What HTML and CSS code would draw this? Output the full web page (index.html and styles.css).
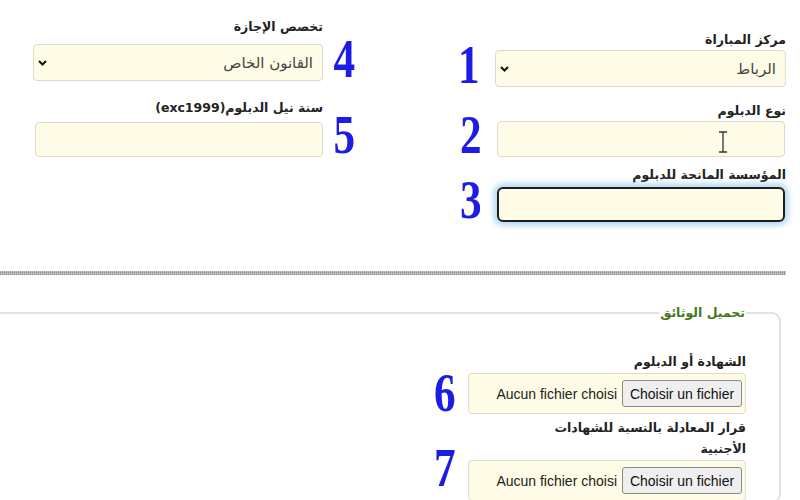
FILE: index.html
```html
<!DOCTYPE html>
<html lang="ar" dir="rtl">
<head>
<meta charset="utf-8">
<link rel="stylesheet" href="styles.css">
</head>
<body>
<div class="page">
  <div class="top">
    <div class="col col-right">
      <div class="field f1">
        <div class="lbl">مركز المباراة</div>
        <div class="row">
          <div class="box select"><span class="val">الرباط</span><svg class="chev" width="9" height="6" viewBox="0 0 9 6"><path d="M1 1 L4.5 4.5 L8 1" fill="none" stroke="#111" stroke-width="2"/></svg></div>
          <span class="num">1</span>
        </div>
      </div>
      <div class="field f2">
        <div class="lbl">نوع الدبلوم</div>
        <div class="row">
          <div class="box input hover"><svg class="ibeam" width="10" height="22" viewBox="0 0 10 22"><path d="M1 1 H9 M5 1 V21 M1 21 H9" fill="none" stroke="#333" stroke-width="1.3"/></svg></div>
          <span class="num">2</span>
        </div>
      </div>
      <div class="field f3">
        <div class="lbl">المؤسسة المانحة للدبلوم</div>
        <div class="row">
          <div class="box input focus"></div>
          <span class="num">3</span>
        </div>
      </div>
    </div>
    <div class="col col-left">
      <div class="field f4">
        <div class="lbl">تخصص الإجازة</div>
        <div class="row">
          <span class="num">4</span>
          <div class="box select"><span class="val">القانون الخاص</span><svg class="chev" width="9" height="6" viewBox="0 0 9 6"><path d="M1 1 L4.5 4.5 L8 1" fill="none" stroke="#111" stroke-width="2"/></svg></div>
        </div>
      </div>
      <div class="field f5">
        <div class="lbl">سنة نيل الدبلوم(exc1999)</div>
        <div class="row">
          <span class="num">5</span>
          <div class="box input"></div>
        </div>
      </div>
    </div>
  </div>
  <div class="sep"></div>
  <fieldset class="docs">
    <legend>تحميل الوثائق</legend>
    <div class="ffield f6">
      <div class="lbl">الشهادة أو الدبلوم</div>
      <div class="row">
        <div class="filebox"><span class="btn">Choisir un fichier</span><span class="none">Aucun fichier choisi</span></div>
        <span class="num">6</span>
      </div>
    </div>
    <div class="ffield f7">
      <div class="lbl two">قرار المعادلة بالنسبة للشهادات<br>الأجنبية</div>
      <div class="row">
        <div class="filebox"><span class="btn">Choisir un fichier</span><span class="none">Aucun fichier choisi</span></div>
        <span class="num num-high">7</span>
      </div>
    </div>
  </fieldset>
</div>
</body>
</html>
```
FILE: styles.css
```css
html, body {
  margin: 0;
  padding: 0;
  background: #ffffff;
  overflow: hidden;
}
body {
  width: 800px;
  height: 500px;
  font-family: "DejaVu Sans", "Liberation Sans", sans-serif;
  color: #222;
}
.page {
  direction: rtl;
}
.top {
  display: flex;
  justify-content: space-between;
  padding: 0 14px 0 33px;
  height: 221px;
}
.col {
  display: flex;
  flex-direction: column;
}
.col-right { width: 328px; padding-top: 31px; }
.col-left { width: 324px; padding-top: 18px; }

.lbl {
  font-size: 12.5px;
  font-weight: bold;
  line-height: 18px;
  color: #222;
}
.col-left .lbl { margin-right: 34px; }

.row {
  display: flex;
  align-items: center;
}
.col-right .row { gap: 13px; }
.col-left .row { gap: 14px; }

.f1 .lbl { margin-bottom: 1px; }
.f2 { margin-top: 15px; }
.f2 .lbl { margin-bottom: 1px; }
.f3 { margin-top: 9px; }
.f3 .lbl { margin-bottom: 2px; }
.f4 .lbl { margin-bottom: 8px; }
.f5 { margin-top: 18px; }
.f5 .lbl { margin-bottom: 4px; }

.box {
  box-sizing: border-box;
  background: #fefbe6;
  border: 1px solid #dedbcc;
  border-radius: 4px;
  position: relative;
}
.select {
  width: 291px;
  height: 37px;
  display: flex;
  align-items: center;
  justify-content: space-between;
  padding: 0 9px 0 4px;
}
.col-left .select { width: 290px; }
.val {
  font-size: 15px;
  color: #444;
}
.chev { display: block; }
.input {
  width: 288px;
  height: 36px;
  margin-right: 1px;
}
.col-left .input { height: 35px; margin-right: 0; }
.focus {
  height: 35px;
  border: 2.5px solid #1e1e1e;
  border-radius: 6px;
  box-shadow: 0 0 5px 4px rgba(140, 200, 236, 0.6);
}
.ibeam {
  position: absolute;
  left: 220px;
  top: 9px;
}

.num {
  display: inline-block;
  width: 24px;
  height: 36px;
  text-align: center;
  font-family: "Liberation Serif", "Times New Roman", serif;
  font-weight: bold;
  font-size: 54px;
  line-height: 36px;
  color: #1c1ce6;
  transform: translateY(-4px) scaleX(0.8);
}
.col-left .num { width: 20px; }

.sep {
  margin: 50px 14px 0 0;
  height: 4px;
  background:
    repeating-linear-gradient(90deg, rgba(120,120,120,0.55) 0 1px, rgba(200,200,200,0.5) 1px 2px),
    repeating-linear-gradient(0deg, #b0b0b0 0 1px, #d6d6d6 1px 2px);
}

.docs {
  margin: 29px 19px 0 -24px;
  padding: 0 33px 0 0;
  border: 2px solid #e2e2e2;
  border-radius: 9px;
  min-width: 0;
}
.docs legend {
  padding: 0 1px;
  font-size: 12.5px;
  font-weight: bold;
  line-height: 18px;
  color: #467a17;
}
.ffield .row { gap: 10px; }
.f6 { margin-top: 31px; }
.f6 .lbl { margin-bottom: 2px; }
.f7 { margin-top: 3px; }
.lbl.two { line-height: 21px; margin-bottom: 1px; }

.filebox {
  box-sizing: border-box;
  width: 278px;
  height: 41px;
  background: #fefbe6;
  border: 1px solid #dedbcc;
  border-radius: 4px;
  display: flex;
  align-items: center;
  padding-right: 3px;
  gap: 5px;
  font-family: "Liberation Sans", Arial, sans-serif;
  font-size: 14px;
  color: #222;
}
.btn {
  box-sizing: border-box;
  height: 27px;
  width: 120px;
  display: flex;
  align-items: center;
  justify-content: center;
  background: #efefef;
  border: 1px solid #8a8a8a;
  border-radius: 3px;
  color: #111;
  white-space: nowrap;
}
.none { white-space: nowrap; }
.ffield .num { transform: translateY(-1px) scaleX(0.8); }
.ffield .num-high { transform: translateY(-13px) scaleX(0.8); }
```
